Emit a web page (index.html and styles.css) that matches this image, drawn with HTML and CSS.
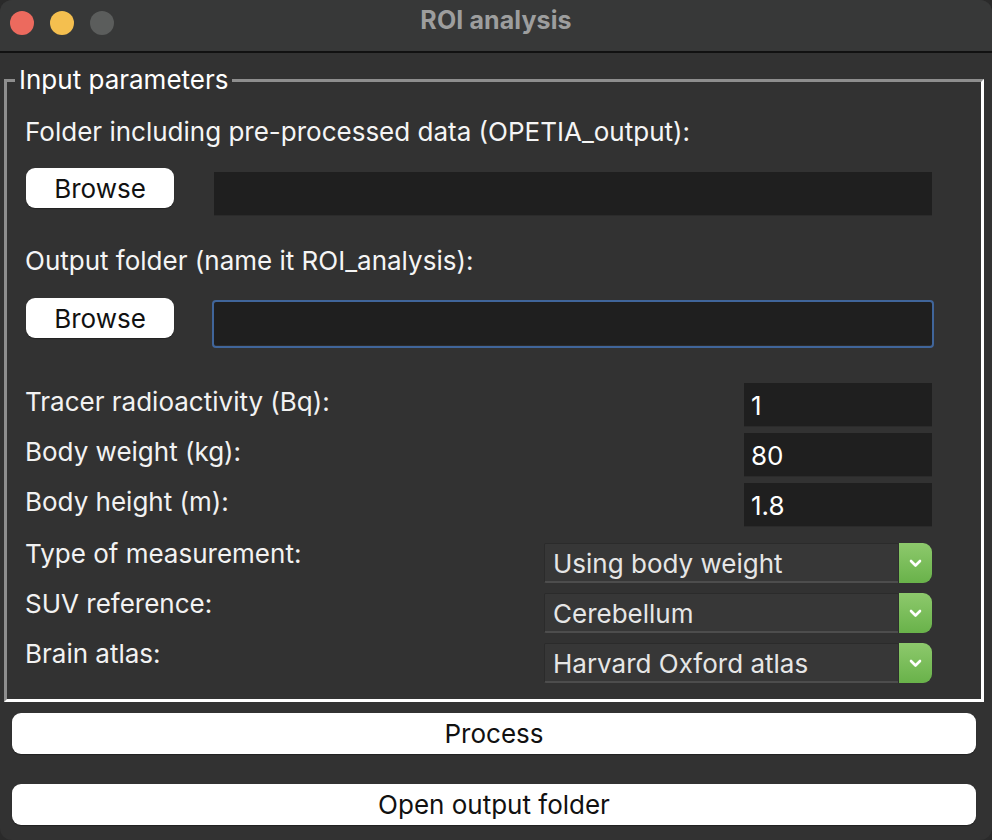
FILE: index.html
```html
<!DOCTYPE html>
<html>
<head>
<meta charset="utf-8">
<title>ROI analysis</title>
<link rel="stylesheet" href="styles.css">
</head>
<body>
<div class="window">
  <div class="titlebar">
    <div class="lights">
      <span class="light red"></span>
      <span class="light yellow"></span>
      <span class="light gray"></span>
    </div>
    <div class="title">ROI analysis</div>
  </div>
  <div class="content">
    <fieldset class="group">
      <legend class="group-legend">Input parameters</legend>
      <div class="group-inner">
        <div class="label first">Folder including pre-processed data (OPETIA_output):</div>
        <div class="browse-row">
          <button class="btn browse">Browse</button>
          <div class="entry path"></div>
        </div>
        <div class="label second">Output folder (name it ROI_analysis):</div>
        <div class="browse-row">
          <button class="btn browse">Browse</button>
          <div class="entry path focused"></div>
        </div>
        <div class="fields">
          <div class="field-row">
            <div class="flabel">Tracer radioactivity (Bq):</div>
            <div class="entry num">1</div>
          </div>
          <div class="field-row">
            <div class="flabel">Body weight (kg):</div>
            <div class="entry num">80</div>
          </div>
          <div class="field-row">
            <div class="flabel">Body height (m):</div>
            <div class="entry num">1.8</div>
          </div>
        </div>
        <div class="combos">
          <div class="combo-row">
            <div class="clabel">Type of measurement:</div>
            <div class="combo"><span class="combo-text">Using body weight</span><span class="combo-arrow"><svg width="13" height="9" viewBox="0 0 13 9"><path d="M2 2 L6.5 6.5 L11 2" fill="none" stroke="#fff" stroke-width="2.6" stroke-linecap="round" stroke-linejoin="round"/></svg></span></div>
          </div>
          <div class="combo-row">
            <div class="clabel">SUV reference:</div>
            <div class="combo"><span class="combo-text">Cerebellum</span><span class="combo-arrow"><svg width="13" height="9" viewBox="0 0 13 9"><path d="M2 2 L6.5 6.5 L11 2" fill="none" stroke="#fff" stroke-width="2.6" stroke-linecap="round" stroke-linejoin="round"/></svg></span></div>
          </div>
          <div class="combo-row">
            <div class="clabel">Brain atlas:</div>
            <div class="combo"><span class="combo-text">Harvard Oxford atlas</span><span class="combo-arrow"><svg width="13" height="9" viewBox="0 0 13 9"><path d="M2 2 L6.5 6.5 L11 2" fill="none" stroke="#fff" stroke-width="2.6" stroke-linecap="round" stroke-linejoin="round"/></svg></span></div>
          </div>
        </div>
      </div>
    </fieldset>
    <button class="btn wide process">Process</button>
    <button class="btn wide open">Open output folder</button>
  </div>
</div>
</body>
</html>
```
FILE: styles.css
```css
* { box-sizing: border-box; }
html, body {
  margin: 0;
  padding: 0;
  background: #2a2a2a;
}
body {
  font-family: "Inter", "Liberation Sans", sans-serif;
  font-size: 26px;
  color: #f2f2f2;
}
.window {
  width: 992px;
  height: 840px;
  background: #323232;
  border-radius: 12px;
  overflow: hidden;
  display: flex;
  flex-direction: column;
}
.titlebar {
  height: 53px;
  background: #373838;
  border-bottom: 2px solid #111;
  position: relative;
  display: flex;
  align-items: center;
  justify-content: center;
  flex-shrink: 0;
}
.lights {
  position: absolute;
  left: 10px;
  top: 11px;
  display: flex;
  gap: 16px;
}
.light {
  width: 24px;
  height: 24px;
  border-radius: 50%;
  display: block;
}
.light.red { background: #ec6a5e; }
.light.yellow { background: #f4bf4f; }
.light.gray { background: #5b5d5c; }
.title {
  font-weight: 700;
  font-size: 25px;
  color: #9d9e9e;
  margin-top: -12px;
  letter-spacing: 0.1px;
}
.content {
  flex: 1;
  display: flex;
  flex-direction: column;
  padding: 0 16px 0 12px;
}
.group {
  margin: 12px -8px 0 -8px;
  padding: 0;
  border-style: solid;
  border-width: 3px;
  border-color: #8e8e8e #ffffff #ffffff #8e8e8e;
}
.group-legend {
  margin-left: 8px;
  padding: 0 4px;
  font-size: 26px;
  line-height: 30px;
  color: #ffffff;
}
.group-inner {
  padding: 22px 49px 16px 18px;
  display: flex;
  flex-direction: column;
}
.label {
  line-height: 30px;
  color: #f5f5f5;
}
.label.first { margin-bottom: 21px; }
.label.second { margin-top: 30px; margin-bottom: 22px; }
.browse-row {
  display: flex;
  align-items: flex-start;
  gap: 40px;
}
.btn {
  font-family: "Inter", "Liberation Sans", sans-serif;
  font-size: 26px;
  color: #111;
  background: #ffffff;
  border: none;
  border-radius: 9px;
  height: 40px;
  padding: 0;
  box-shadow: 0 1px 1px rgba(0,0,0,0.35);
}
.btn.browse {
  width: 148px;
  margin-left: 1px;
}
.entry {
  background: #1f1f1f;
  color: #ffffff;
  height: 44px;
  border-bottom: 1px solid #2b2b2b;
}
.entry.path {
  flex: 1;
  margin-top: 4px;
}
.entry.focused {
  outline: 2px solid #40659a;
  border-radius: 2px;
}
.fields {
  margin-top: 37px;
  display: flex;
  flex-direction: column;
  gap: 6px;
}
.field-row {
  display: flex;
  align-items: center;
  justify-content: space-between;
}
.flabel {
  line-height: 30px;
  margin-top: -6px;
}
.entry.num {
  width: 188px;
  padding: 6px 7px 0;
  line-height: 34px;
}
.combos {
  margin-top: 16px;
  display: flex;
  flex-direction: column;
  gap: 10px;
}
.combo-row {
  display: flex;
  align-items: flex-start;
  justify-content: space-between;
}
.clabel {
  line-height: 30px;
  margin-top: -4px;
}
.combo {
  width: 388px;
  height: 40px;
  display: flex;
  background: #373737;
  border: 1px solid #2b2b2b;
  border-bottom: 2px solid #4d4d4d;
  border-radius: 2px 9px 9px 2px;
}
.combo-text {
  flex: 1;
  padding-left: 8px;
  line-height: 40px;
  color: #e6e6e6;
}
.combo-arrow {
  width: 34px;
  margin: -1px -1px -2px 0;
  background: linear-gradient(#8dc96c, #69b24a);
  border-radius: 0 9px 9px 0;
  display: flex;
  align-items: center;
  justify-content: center;
  border-left: 1px solid #2e2e2e;
}
.btn.wide {
  width: 964px;
  height: 41px;
}
.btn.process { margin-top: 11px; }
.btn.open { margin-top: 30px; }
```
